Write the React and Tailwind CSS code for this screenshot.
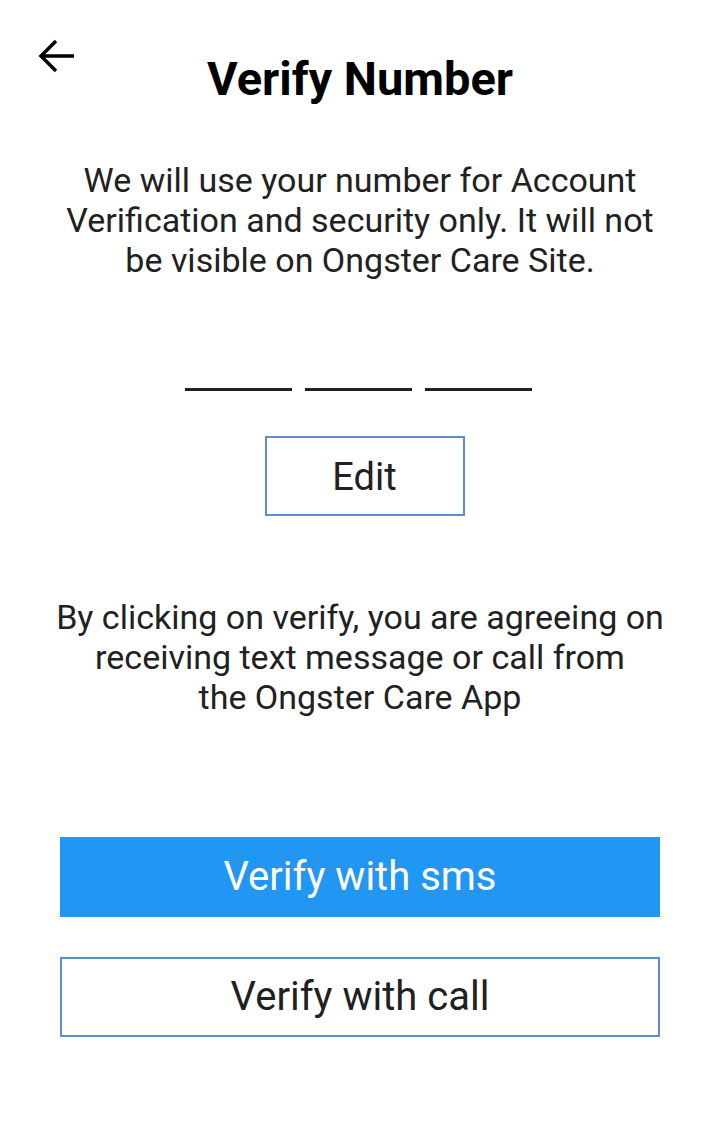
import React from 'react';

const App = () => {
    return (
        <div className="w-[716px] h-[1133px] bg-white flex flex-col items-center pl-[4px] text-[#212121]" style={{ fontFamily: 'Roboto, "Noto Sans", sans-serif' }}>
            <div className="w-full h-[116px] pt-[40px] flex items-center justify-center relative">
                <button className="absolute left-[32px] top-[38px] text-black">
                    <svg width="40" height="36" viewBox="0 0 40 36" fill="none" stroke="currentColor" strokeWidth="3.5" strokeLinecap="butt">
                        <path d="M38 18H5" />
                        <path d="M20 3L5 18L20 33" />
                    </svg>
                </button>
                <h1 className="text-[47px] font-bold text-black leading-none">Verify Number</h1>
            </div>

            <p className="text-[34px] leading-[40px] text-center w-[690px] mt-[44px]">
                We will use your number for Account<br />
                Verification and security only. It will not<br />
                be visible on Ongster Care Site.
            </p>

            <div className="flex gap-[13px] mt-[108px] -ml-[4px]">
                <div className="w-[107px] h-[3px] bg-[#222]" />
                <div className="w-[107px] h-[3px] bg-[#222]" />
                <div className="w-[107px] h-[3px] bg-[#222]" />
            </div>

            <button className="mt-[45px] ml-[9px] w-[200px] h-[80px] border-2 border-[#5b8dd0] text-[38px] flex items-center justify-center">
                <span className="mt-[3px]">Edit</span>
            </button>

            <p className="text-[34px] leading-[40px] text-center w-[690px] mt-[81px]">
                By clicking on verify, you are agreeing on<br />
                receiving text message or call from<br />
                the Ongster Care App
            </p>

            <button className="mt-[120px] w-[600px] h-[80px] bg-[#2196f3] text-white text-[40px] flex items-center justify-center">
                Verify with sms
            </button>

            <button className="mt-[40px] w-[600px] h-[80px] border-2 border-[#5b8dd0] text-[40px] flex items-center justify-center">
                Verify with call
            </button>
        </div>
    );
};

export default App;
